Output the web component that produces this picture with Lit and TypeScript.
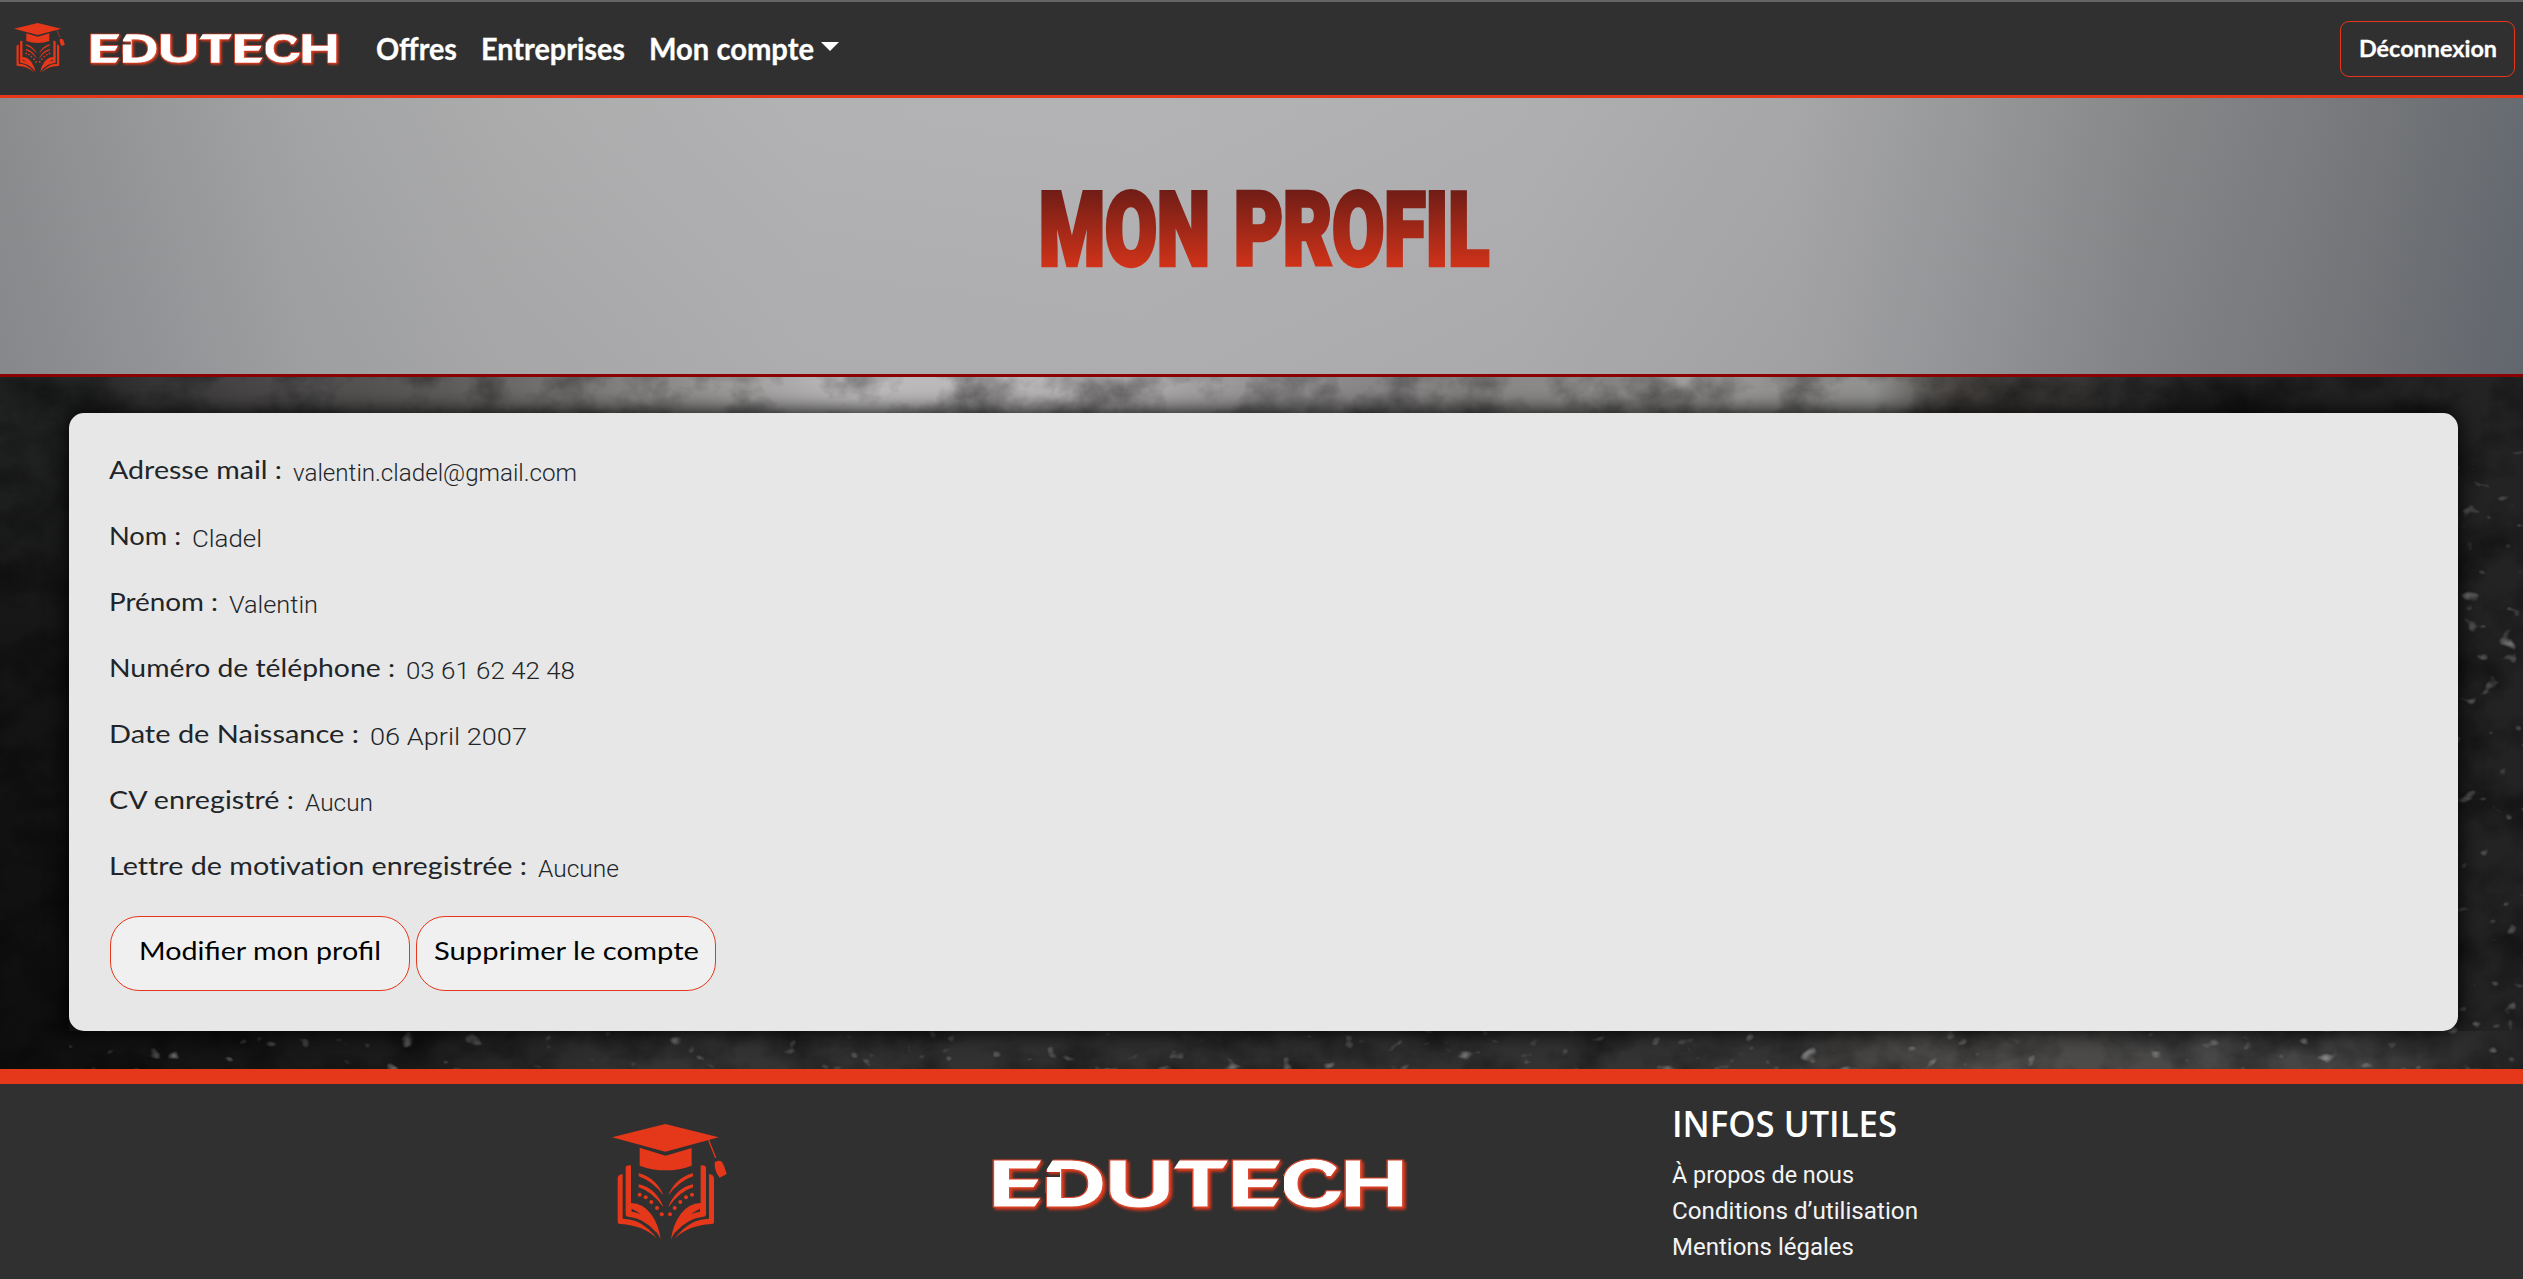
import { LitElement, html, svg, css } from "lit";
import { customElement, property } from "lit/decorators.js";

/** One line of text fitted to a fixed advance width; its bottom edge is the baseline. */
@customElement("fit-text")
class FitText extends LitElement {
  @property() text = "";
  @property({ type: Number }) width = 100;
  @property({ type: Number }) size = 24;

  static styles = css`
    :host {
      display: block;
      flex: none;
    }
    .line {
      display: block;
      overflow: visible;
    }
    .glyphs {
      fill: currentColor;
    }
  `;

  render() {
    return html`<svg class="line" width=${this.width} height=${this.size}>
      <text
        class="glyphs"
        x="0"
        y=${this.size}
        font-size=${this.size}
        textLength=${this.width}
        lengthAdjust="spacingAndGlyphs"
      >${this.text}</text>
    </svg>`;
  }
}

/** Open book with a graduation cap. */
@customElement("brand-icon")
class BrandIcon extends LitElement {
  static styles = css`
    :host {
      display: block;
      flex: none;
    }
    .icon {
      display: block;
      width: 100%;
      height: 100%;
      fill: #e53719;
    }
    .cord {
      fill: none;
      stroke: #e53719;
      stroke-width: 4;
    }
  `;

  private page() {
    return svg`
      <path d="M114 356Q115 344 129 343V477Q172 477 205 507Q222 522 232 537Q192 497 122 493Q114 493 114 486Z"/>
      <path d="M138 324Q139 316 154 317V430Q190 431 214 463Q238 496 243 540Q238 526 222 506Q194 464 156 447V456Q188 458 211 487Q222 500 231 519Q193 475 146 471Q138 471 138 464Z"/>
      <path d="M177 341Q204 347 225 367Q243 385 251 407Q218 364 177 350Z"/>
      <path d="M177 374Q204 379 225 400Q244 420 251 443Q218 396 177 383Z"/>
      <circle cx="180" cy="405" r="6"/>
      <circle cx="198" cy="413" r="6"/>
      <circle cx="215" cy="427" r="6"/>
      <circle cx="232" cy="445" r="6"/>
      <circle cx="246" cy="464" r="6"/>`;
  }

  render() {
    return html`<svg class="icon" viewBox="97 193 345 348" preserveAspectRatio="none">
      <path d="M97 233L257 193L417 233L257 276Z" />
      <path d="M180 264L258 288L336 265V318Q300 332 258 332Q216 332 180 318Z" />
      <path class="cord" d="M387 242L408 294" />
      <path d="M405 308Q414 300 425 305Q432 312 441 343L420 354Q404 336 405 308Z" />
      ${this.page()}
      <g transform="translate(517 0) scale(-1 1)">${this.page()}</g>
    </svg>`;
  }
}

@customElement("brand-name")
class BrandName extends LitElement {
  static styles = css`
    :host {
      display: block;
      flex: none;
    }
    .name {
      display: block;
      width: 100%;
      height: 100%;
      overflow: visible;
      font-family: Inter, "DejaVu Sans", sans-serif;
      font-weight: 800;
      font-size: 64px;
      fill: #fff;
      stroke: #d8452c;
      stroke-width: 1;
    }
    .glow {
      filter: drop-shadow(2px 2px 1.5px #e53719);
    }
    .keep {
      fill: #fff;
      stroke: none;
    }
    .cut {
      fill: #000;
      stroke: none;
    }
  `;

  render() {
    const letters: [string, number, number][] = [
      ["E", -4, 58],
      ["D", 49, 66],
      ["U", 112, 71],
      ["T", 178, 61],
      ["E", 235, 58],
      ["C", 287, 66],
      ["H", 348, 68],
    ];
    const tips = (x: number) => svg`
      <path class="cut" d="M${x + 51} -2L${x + 41} 13H${x + 54}V-2Z"/>
      <path class="cut" d="M${x + 49} 16L${x + 39} 31H${x + 53}V16Z"/>
      <path class="cut" d="M${x + 52} 33L${x + 41} 49H${x + 54}V33Z"/>`;
    return html`<svg class="name" viewBox="0 0 411 47" preserveAspectRatio="none">
      <defs>
        <mask id="slants" maskUnits="userSpaceOnUse" x="-10" y="-10" width="440" height="70">
          <rect class="keep" x="-10" y="-10" width="440" height="70" />
          ${tips(0)} ${tips(239)}
          <path class="cut" d="M52 -2H62L53 12H68V17H52Z" />
          <path class="cut" d="M179 -2H189L179 13Z" />
          <path class="cut" d="M238 -2L227 14H238Z" />
          <path class="cut" d="M352 -2L336 20H352Z" />
        </mask>
      </defs>
      <g class="glow">
        <g mask="url(#slants)">
          <text y="47">${letters.map(
            ([c, x, w]) =>
              svg`<tspan x=${x} textLength=${w} lengthAdjust="spacingAndGlyphs">${c}</tspan>`
          )}</text>
        </g>
      </g>
    </svg>`;
  }
}

interface Field {
  label: string;
  labelWidth: number;
  value: string;
  valueWidth: number;
}

const FIELDS: Field[] = [
  { label: "Adresse mail :", labelWidth: 173, value: "valentin.cladel@gmail.com", valueWidth: 284 },
  { label: "Nom :", labelWidth: 72, value: "Cladel", valueWidth: 70 },
  { label: "Prénom :", labelWidth: 109, value: "Valentin", valueWidth: 89 },
  { label: "Numéro de téléphone :", labelWidth: 286, value: "03 61 62 42 48", valueWidth: 169 },
  { label: "Date de Naissance :", labelWidth: 250, value: "06 April 2007", valueWidth: 157 },
  { label: "CV enregistré :", labelWidth: 185, value: "Aucun", valueWidth: 68 },
  { label: "Lettre de motivation enregistrée :", labelWidth: 418, value: "Aucune", valueWidth: 81 },
];

@customElement("app-root")
class AppRoot extends LitElement {
  static styles = css`
    :host {
      display: flex;
      flex-direction: column;
      box-sizing: border-box;
      width: 100%;
      height: 100vh;
      overflow: hidden;
      font-family: Lato, "Liberation Sans", sans-serif;
      color: #212529;
    }
    .navbar {
      box-sizing: border-box;
      flex: none;
      display: flex;
      align-items: flex-start;
      height: 98px;
      border-top: 2px solid #656565;
      border-bottom: 3px solid #e53719;
      background: #303030;
      color: #fff;
      padding: 0 8px 0 14px;
      font-weight: 700;
    }
    .nav-icon {
      width: 51px;
      height: 50px;
      margin-top: 21px;
    }
    .nav-name {
      width: 247px;
      height: 29px;
      margin: 32px 0 0 25px;
    }
    .links {
      display: flex;
      align-items: flex-end;
      gap: 24px;
      height: 57px;
      margin-left: 39px;
      stroke: #fff;
      stroke-width: 0.3;
    }
    .menu {
      display: flex;
      align-items: flex-end;
      gap: 7px;
    }
    .caret {
      border: 9px solid transparent;
      border-top-color: #fff;
      border-bottom: 0;
      margin-bottom: 8px;
    }
    .logout {
      box-sizing: border-box;
      display: flex;
      align-items: flex-end;
      justify-content: center;
      width: 175px;
      height: 56px;
      margin: 19px 0 0 auto;
      padding-bottom: 20px;
      border: 1px solid #e53719;
      border-radius: 9px;
      stroke: #fff;
      stroke-width: 0.3;
    }
    .hero {
      box-sizing: border-box;
      flex: none;
      display: flex;
      justify-content: center;
      height: 279px;
      padding: 90px 0 0 6px;
      border-bottom: 3px solid #8b0000;
      background:
        linear-gradient(rgba(255, 255, 255, 0.03), rgba(90, 90, 110, 0.04)),
        linear-gradient(
          90deg,
          #87898b 0%,
          #929395 5%,
          #a0a1a2 12%,
          #a9a9aa 20%,
          #b0b0b2 32%,
          #b1b1b3 45%,
          #adadaf 60%,
          #a4a4a6 71%,
          #949597 78%,
          #838486 85%,
          #76777a 92%,
          #696c70 97%,
          #62676d 100%
        );
    }
    .title {
      display: block;
      width: 450px;
      height: 84px;
      overflow: visible;
      font-family: Roboto, "Liberation Sans", sans-serif;
      font-weight: 900;
      font-size: 102px;
      word-spacing: 7px;
      fill: url(#title-fill);
      stroke: url(#title-fill);
      stroke-width: 4.5;
    }
    .main {
      flex: none;
      display: grid;
      height: 692px;
      background: #1b1b1b;
    }
    .concrete,
    .card {
      grid-area: 1 / 1;
    }
    .concrete {
      display: block;
      width: 100%;
      height: 692px;
    }
    .card {
      box-sizing: border-box;
      margin: 36px 65px 38px 69px;
      padding-left: 40px;
      border-radius: 15px;
      background: #e7e7e7;
      box-shadow: 0 0 22px 1px #000;
      z-index: 1;
    }
    .row {
      display: flex;
      align-items: flex-end;
      height: 66px;
      gap: 11px;
    }
    .label {
      font-weight: 400;
      font-variant-ligatures: none;
    }
    .value {
      font-family: Roboto, "Liberation Sans", sans-serif;
      font-weight: 300;
      margin-bottom: -2px;
    }
    .actions {
      display: flex;
      gap: 6px;
      margin: 41px 0 0 1px;
    }
    .action {
      box-sizing: border-box;
      display: flex;
      align-items: flex-end;
      justify-content: center;
      width: 300px;
      height: 75px;
      padding-bottom: 30px;
      border: 1px solid #e53719;
      border-radius: 29px;
      background: #f0f0f0;
      color: #000;
      font-weight: 400;
    }
    .footer {
      box-sizing: border-box;
      flex: 1;
      display: flex;
      align-items: flex-start;
      border-top: 15px solid #e53719;
      background: #303030;
      color: #fff;
      padding-left: 612px;
    }
    .foot-icon {
      width: 115px;
      height: 116px;
      margin-top: 40px;
    }
    .foot-name {
      width: 411px;
      height: 47px;
      margin: 76px 0 0 265px;
    }
    .infos {
      margin: 17px 0 0 269px;
    }
    .infos-title {
      font-family: "Open Sans", "Noto Sans", sans-serif;
      font-weight: 600;
      margin-bottom: 10px;
    }
    .infos-link {
      display: flex;
      align-items: flex-end;
      height: 36px;
      font-family: Roboto, "Liberation Sans", sans-serif;
      font-weight: 400;
      color: #f4f4f4;
    }
  `;

  private concrete() {
    return html`<svg class="concrete" viewBox="0 0 2523 692" preserveAspectRatio="none">
      <defs>
        <linearGradient id="band">
          <stop offset="0" stop-color="#232424" />
          <stop offset=".07" stop-color="#464445" />
          <stop offset=".16" stop-color="#5e5d5b" />
          <stop offset=".25" stop-color="#8b8a88" />
          <stop offset=".33" stop-color="#bebcbd" />
          <stop offset=".44" stop-color="#b4b1b2" />
          <stop offset=".5" stop-color="#939192" />
          <stop offset=".55" stop-color="#868484" />
          <stop offset=".62" stop-color="#8b8a88" />
          <stop offset=".67" stop-color="#a09f9d" />
          <stop offset=".72" stop-color="#91908e" />
          <stop offset=".755" stop-color="#91918f" />
          <stop offset=".79" stop-color="#45423f" />
          <stop offset=".86" stop-color="#333232" />
          <stop offset=".9" stop-color="#222" />
          <stop offset="1" stop-color="#232323" />
        </linearGradient>
        <linearGradient id="floor">
          <stop offset="0" stop-color="#0e0e0e" />
          <stop offset=".15" stop-color="#1c1b1c" />
          <stop offset=".26" stop-color="#353435" />
          <stop offset=".5" stop-color="#302f2f" />
          <stop offset=".7" stop-color="#363535" />
          <stop offset=".77" stop-color="#504f4d" />
          <stop offset=".93" stop-color="#454445" />
          <stop offset="1" stop-color="#242324" />
        </linearGradient>
        <linearGradient id="left-edge" x1="0" y1="0" x2="0" y2="1">
          <stop offset="0" stop-color="#232424" />
          <stop offset=".4" stop-color="#151515" />
          <stop offset="1" stop-color="#0e0e0e" />
        </linearGradient>
        <filter id="mottle" x="0" y="0" width="100%" height="100%">
          <feTurbulence type="fractalNoise" baseFrequency=".018 .022" numOctaves="5" seed="8" />
          <feColorMatrix values="0 0 0 0 0  0 0 0 0 0  0 0 0 0 0  2 0 0 0 -.8" />
        </filter>
        <filter id="specks" x="0" y="0" width="100%" height="100%">
          <feTurbulence type="fractalNoise" baseFrequency=".05 .07" numOctaves="2" seed="21" />
          <feColorMatrix values="0 0 0 0 .6  0 0 0 0 .6  0 0 0 0 .6  0 5 0 0 -3.4" />
        </filter>
      </defs>
      <rect width="2523" height="692" fill="#232323" />
      <rect width="69" height="692" fill="url(#left-edge)" />
      <rect x="69" width="2389" height="60" fill="url(#band)" />
      <rect y="654" width="2523" height="38" fill="url(#floor)" />
      <rect width="2523" height="692" filter="url(#mottle)" opacity=".45" />
      <rect x="69" y="60" width="2454" height="632" filter="url(#specks)" opacity=".55" />
    </svg>`;
  }

  render() {
    return html`
      <nav class="navbar">
        <brand-icon class="nav-icon"></brand-icon>
        <brand-name class="nav-name"></brand-name>
        <div class="links">
          <fit-text text="Offres" .width=${81} .size=${29.5}></fit-text>
          <fit-text text="Entreprises" .width=${144} .size=${29.5}></fit-text>
          <div class="menu">
            <fit-text text="Mon compte" .width=${165} .size=${29.5}></fit-text>
            <span class="caret"></span>
          </div>
        </div>
        <div class="logout"><fit-text text="Déconnexion" .width=${138} .size=${23.5}></fit-text></div>
      </nav>
      <header class="hero">
        <svg class="title" viewBox="0 0 450 84">
          <defs>
            <linearGradient id="title-fill" gradientUnits="userSpaceOnUse" x1="0" y1="0" x2="0" y2="84">
              <stop offset="0" stop-color="#6d1c16" />
              <stop offset="1" stop-color="#d63419" />
            </linearGradient>
          </defs>
          <text x="-1" y="76.5" textLength="450" lengthAdjust="spacingAndGlyphs">MON PROFIL</text>
        </svg>
      </header>
      <main class="main">
        ${this.concrete()}
        <section class="card">
          ${FIELDS.map(
            (f) => html`<div class="row">
              <fit-text class="label" .text=${f.label} .width=${f.labelWidth} .size=${25}></fit-text>
              <fit-text class="value" .text=${f.value} .width=${f.valueWidth} .size=${23}></fit-text>
            </div>`
          )}
          <div class="actions">
            <div class="action"><fit-text text="Modifier mon profil" .width=${242} .size=${25}></fit-text></div>
            <div class="action"><fit-text text="Supprimer le compte" .width=${265} .size=${25}></fit-text></div>
          </div>
        </section>
      </main>
      <footer class="footer">
        <brand-icon class="foot-icon"></brand-icon>
        <brand-name class="foot-name"></brand-name>
        <div class="infos">
          <fit-text class="infos-title" text="INFOS UTILES" .width=${225} .size=${36}></fit-text>
          <div class="infos-link"><fit-text text="À propos de nous" .width=${182} .size=${24}></fit-text></div>
          <div class="infos-link"><fit-text text="Conditions d’utilisation" .width=${246} .size=${24}></fit-text></div>
          <div class="infos-link"><fit-text text="Mentions légales" .width=${182} .size=${24}></fit-text></div>
        </div>
      </footer>
    `;
  }
}
